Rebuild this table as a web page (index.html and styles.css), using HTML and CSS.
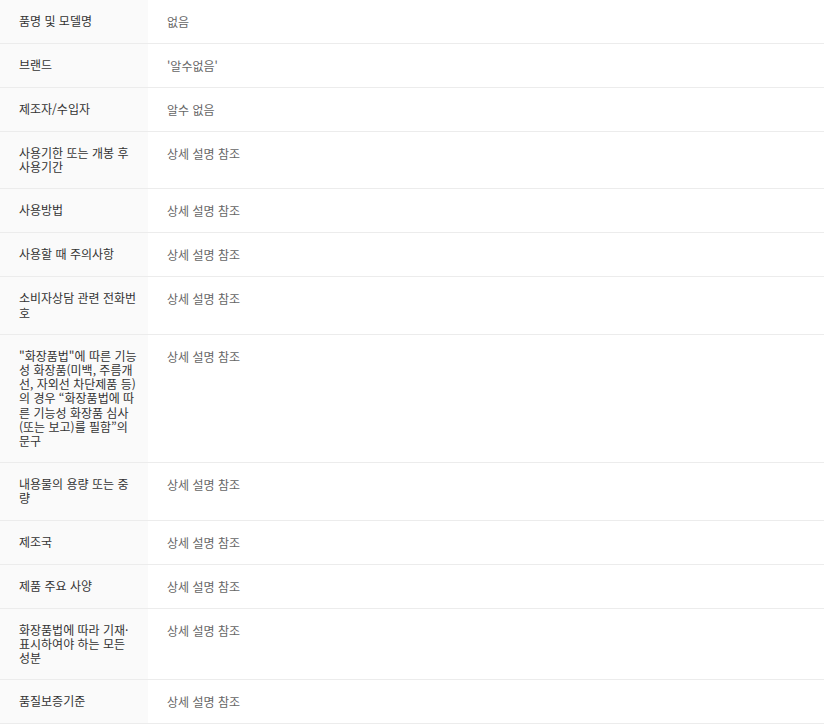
FILE: index.html
```html
<!DOCTYPE html>
<html lang="ko">
<head>
<meta charset="utf-8">
<title>상품정보고시</title>
<link rel="stylesheet" href="styles.css">
</head>
<body>
<table class="spec">
  <tbody>
    <tr><th>품명 및 모델명</th><td>없음</td></tr>
    <tr><th>브랜드</th><td>'알수없음'</td></tr>
    <tr><th>제조자/수입자</th><td>알수 없음</td></tr>
    <tr><th>사용기한 또는 개봉 후 사용기간</th><td>상세 설명 참조</td></tr>
    <tr><th>사용방법</th><td>상세 설명 참조</td></tr>
    <tr><th>사용할 때 주의사항</th><td>상세 설명 참조</td></tr>
    <tr><th>소비자상담 관련 전화번호</th><td>상세 설명 참조</td></tr>
    <tr><th>"화장품법"에 따른 기능성 화장품(미백, 주름개선, 자외선 차단제품 등)의 경우 “화장품법에 따른 기능성 화장품 심사(또는 보고)를 필함”의 문구</th><td>상세 설명 참조</td></tr>
    <tr><th>내용물의 용량 또는 중량</th><td>상세 설명 참조</td></tr>
    <tr><th>제조국</th><td>상세 설명 참조</td></tr>
    <tr><th>제품 주요 사양</th><td>상세 설명 참조</td></tr>
    <tr><th>화장품법에 따라 기재·표시하여야 하는 모든 성분</th><td>상세 설명 참조</td></tr>
    <tr><th>품질보증기준</th><td>상세 설명 참조</td></tr>
  </tbody>
</table>
</body>
</html>
```

FILE: styles.css
```css
html, body {
  margin: 0;
  padding: 0;
  background: #fff;
}
body {
  font-family: "Noto Sans CJK KR", "Noto Sans", sans-serif;
  font-size: 12px;
}
.spec {
  width: 824px;
  border-collapse: collapse;
  table-layout: fixed;
}
.spec th,
.spec td {
  padding: 14px 18px 14px 19px;
  vertical-align: top;
  text-align: left;
  border-bottom: 1px solid #ececec;
  word-break: break-all;
}
.spec th {
  width: 119px;
  padding-right: 10px;
  background: #fafafa;
  color: #333;
  font-weight: normal;
  line-height: 14.2px;
}
.spec td {
  color: #666;
  line-height: 15px;
}
```
